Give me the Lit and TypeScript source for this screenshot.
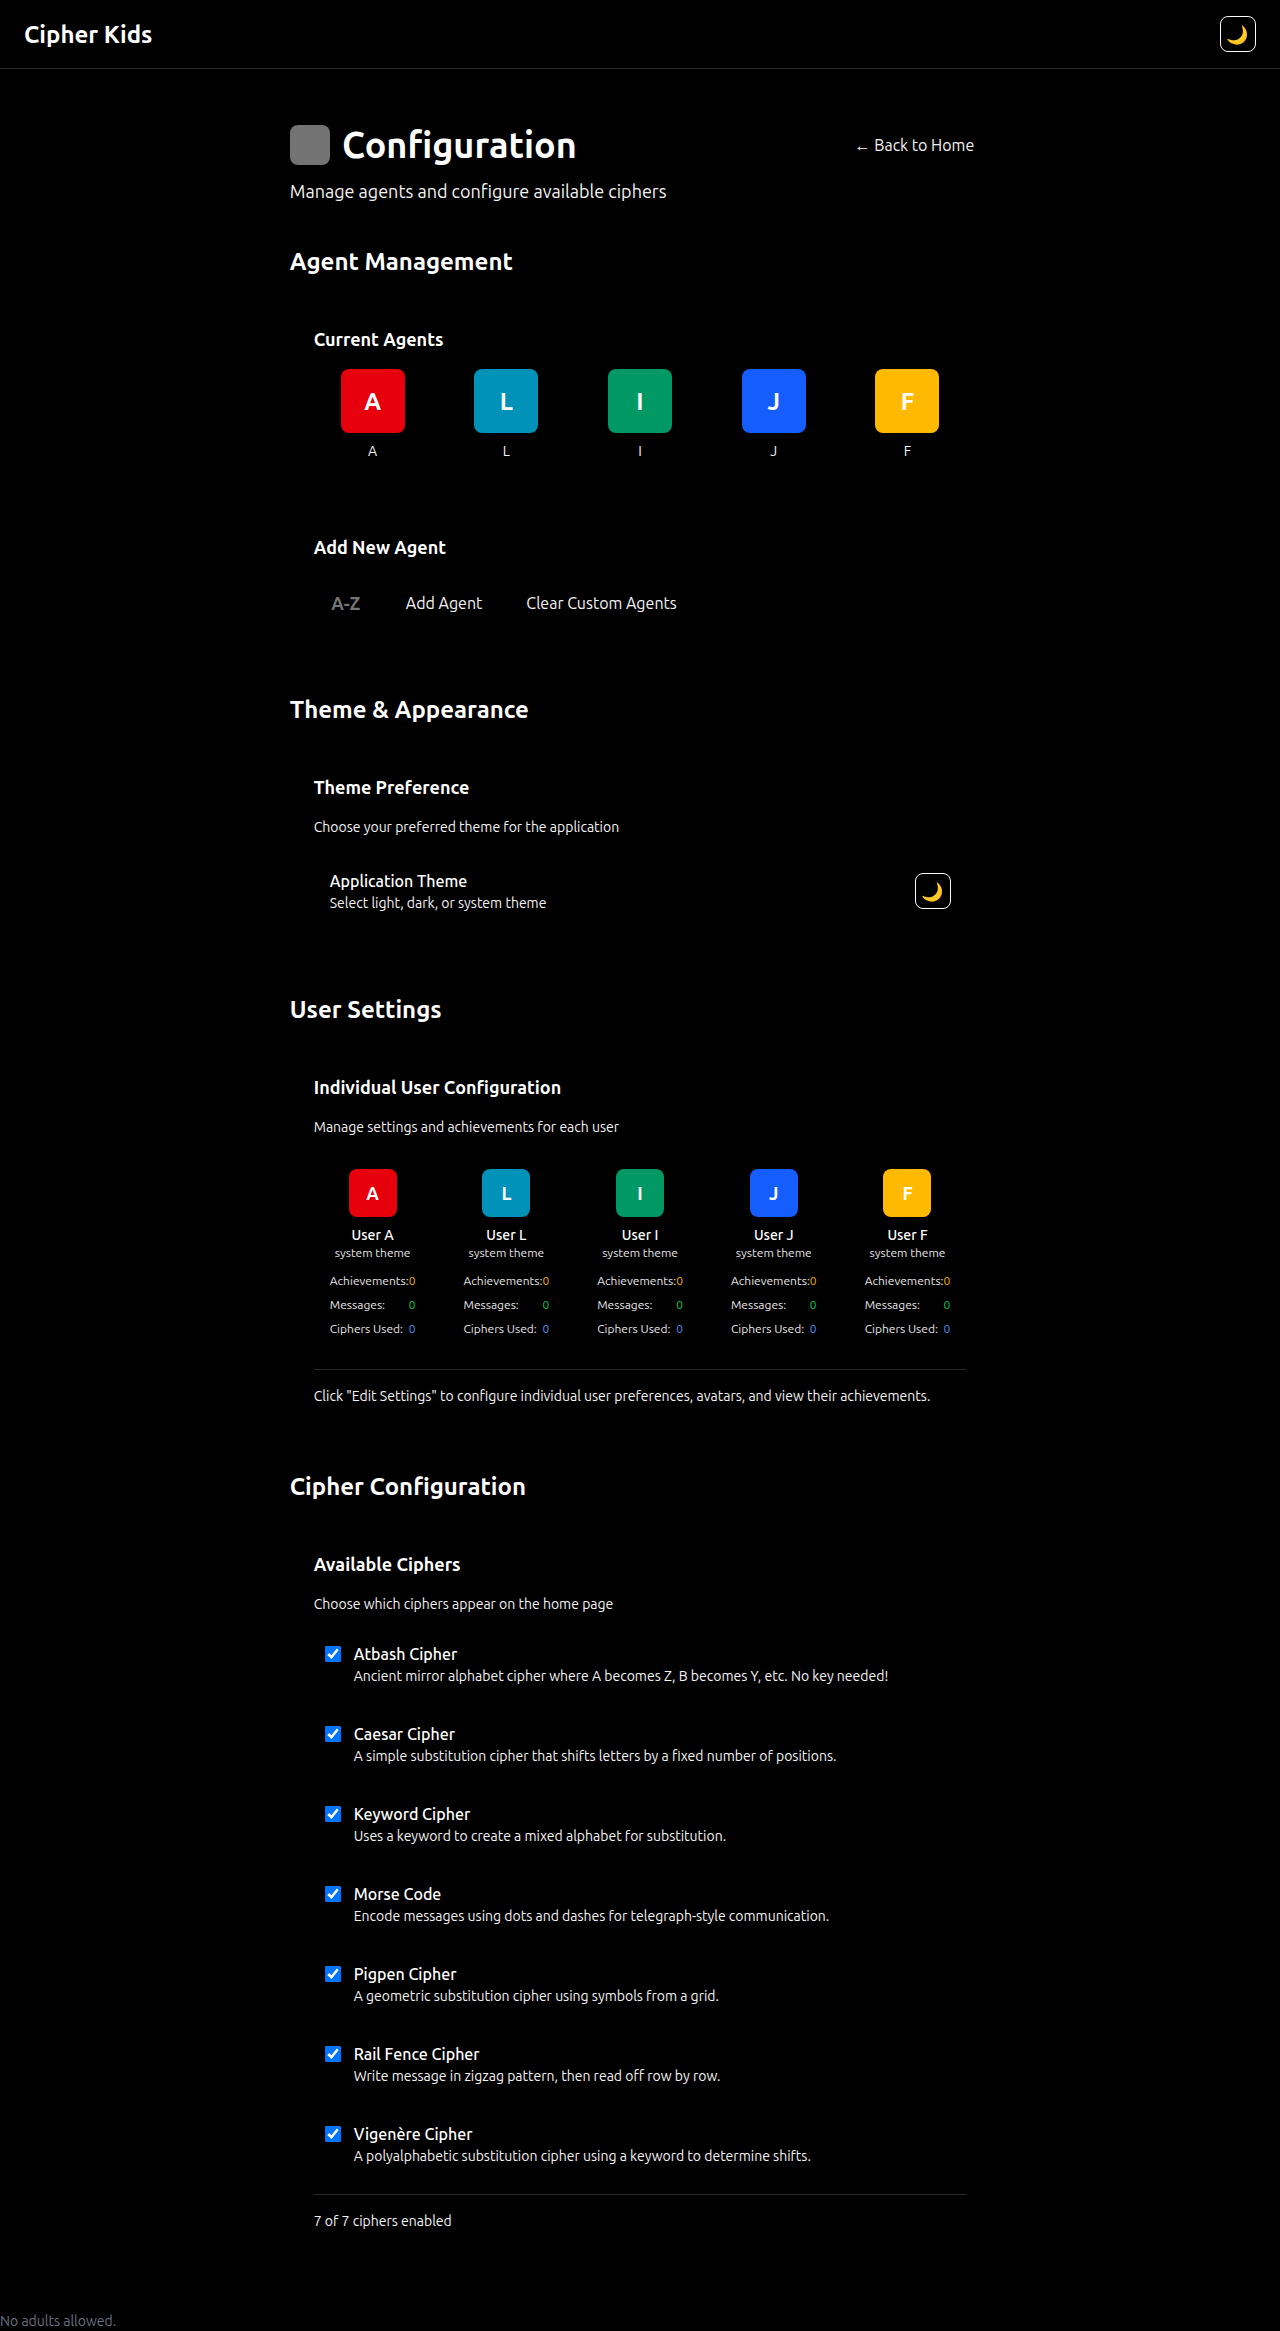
import { LitElement, html, css } from "lit";
import { customElement, property } from "lit/decorators.js";

const AGENTS = [
  { id: "A", tone: "red" },
  { id: "L", tone: "cyan" },
  { id: "I", tone: "green" },
  { id: "J", tone: "blue" },
  { id: "F", tone: "amber" },
];

const CIPHERS = [
  ["Atbash Cipher", "Ancient mirror alphabet cipher where A becomes Z, B becomes Y, etc. No key needed!"],
  ["Caesar Cipher", "A simple substitution cipher that shifts letters by a fixed number of positions."],
  ["Keyword Cipher", "Uses a keyword to create a mixed alphabet for substitution."],
  ["Morse Code", "Encode messages using dots and dashes for telegraph-style communication."],
  ["Pigpen Cipher", "A geometric substitution cipher using symbols from a grid."],
  ["Rail Fence Cipher", "Write message in zigzag pattern, then read off row by row."],
  ["Vigenère Cipher", "A polyalphabetic substitution cipher using a keyword to determine shifts."],
];

@customElement("theme-button")
class ThemeButton extends LitElement {
  static styles = css`
    :host { display: block; }
    .btn {
      display: flex; align-items: center; justify-content: center;
      box-sizing: border-box; width: 36px; height: 36px; padding: 0;
      border: 1px solid #fafafa; border-radius: 8px; background: #000;
      color: #fafafa; font: 18px/28px Ubuntu, "Noto Color Emoji", sans-serif;
    }
  `;
  render() {
    return html`<button class="btn" aria-label="Theme">🌙</button>`;
  }
}

@customElement("agent-tile")
class AgentTile extends LitElement {
  @property() letter = "";
  @property() tone = "";
  @property() size = "lg";
  static styles = css`
    :host { display: block; }
    .tile {
      display: flex; align-items: center; justify-content: center;
      box-sizing: border-box; border-radius: 8px; color: #fff; font-weight: 700;
    }
    .lg { width: 64px; height: 64px; padding-top: 2px; font-size: 24px; line-height: 32px; }
    .sm { width: 48px; height: 48px; font-size: 18px; line-height: 28px; }
    .red { background: #e7000b; }
    .cyan { background: #0092b8; }
    .green { background: #009966; }
    .blue { background: #155dfc; }
    .amber { background: #ffb900; }
  `;
  render() {
    return html`<div class="tile ${this.size} ${this.tone}">${this.letter}</div>`;
  }
}

@customElement("app-root")
class AppRoot extends LitElement {
  static styles = css`
    :host {
      display: block; min-height: 2331px; background: #000; color: #fff;
      font: 16px/24px Ubuntu, "Ubuntu Sans", "Noto Sans", sans-serif;
    }
    h1, h2, h3, p { margin: 0; }
    .bar {
      display: flex; align-items: center; justify-content: space-between;
      padding: 16px 24px; border-bottom: 1px solid #27272a;
    }
    .brand { padding-top: 2px; font-size: 24px; line-height: 32px; font-weight: 700; }
    .main { width: 700.5px; margin: 0 auto; padding-top: 56px; }
    .top { display: flex; align-items: center; justify-content: space-between; padding-right: 16px; height: 40px; }
    .name { display: flex; align-items: center; gap: 12.5px; }
    .mark { width: 40px; height: 40px; margin-left: -0.25px; border-radius: 8px; background: #737373; }
    h1 { font-size: 36px; line-height: 40px; font-weight: 700; }
    .back { color: #f4f4f5; }
    .sub { font-size: 18px; line-height: 28px; margin-top: 12px; color: #f4f4f5; }
    h2 { padding-top: 1px; font-size: 24px; line-height: 32px; font-weight: 700; }
    h3 { font-size: 18px; line-height: 28px; font-weight: 700; }
    .section { padding-top: 40px; }
    .card { padding: 47px 24px 0; }
    .note { font-size: 14px; line-height: 20px; color: #f4f4f5; margin-top: 16px; }
    .grid { display: grid; grid-template-columns: repeat(5, 1fr); gap: 16px; }
    .agents { margin-top: 16px; }
    .agent { display: flex; flex-direction: column; align-items: center; gap: 8px; }
    .caption { font-size: 14px; line-height: 20px; color: #f4f4f5; }
    .add { padding-top: 72px; }
    .form { display: flex; align-items: center; height: 48px; margin-top: 18px; color: #f4f4f5; }
    .hint { width: 64px; text-align: center; font-size: 18px; font-weight: 700; color: #757575; }
    .act { padding: 0 16px; }
    .act.first { margin-left: 12px; }
    .act.second { margin-left: 12px; }
    .row { display: flex; align-items: center; justify-content: space-between; padding: 32px 15.75px 0 16px; }
    .item { font-weight: 500; line-height: 24px; }
    .desc { font-size: 14px; line-height: 20px; color: #f4f4f5; }
    .theme { padding-top: 66px; }
    .users { padding-top: 80px; }
    .people { margin-top: 32px; }
    .person { display: flex; flex-direction: column; align-items: center; padding: 0 16px; }
    .who { font-size: 14px; line-height: 20px; font-weight: 500; margin-top: 8px; }
    .mode { font-size: 12px; line-height: 16px; color: #e4e4e7; white-space: nowrap; }
    .stats { display: flex; flex-direction: column; gap: 8px; width: 100%; margin-top: 12px; }
    .stat { display: flex; justify-content: space-between; font-size: 12px; line-height: 16px; color: #e4e4e7; white-space: nowrap; }
    .n0 { color: #f0b100; }
    .n1 { color: #00c951; }
    .n2 { color: #4a90f0; }
    .foot { border-top: 1px solid #27272a; padding-top: 16px; margin-top: 32px; font-size: 14px; line-height: 20px; color: #f4f4f5; }
    .ciphers { padding-top: 64px; }
    .list { display: flex; flex-direction: column; gap: 36px; margin-top: 28px; padding-left: 11.5px; }
    .cipher { display: flex; gap: 12.5px; height: 44px; }
    .check { width: 16px; height: 16px; margin: 4px 0 0; flex: none; }
    .last { margin-top: 28px; }
    .end { padding-top: 80px; font-size: 14px; line-height: 20px; color: #6a7282; }
  `;

  users() {
    const labels = ["Achievements:", "Messages:", "Ciphers Used:"];
    return AGENTS.map(
      (a) => html`<div class="person">
        <agent-tile size="sm" letter=${a.id} tone=${a.tone}></agent-tile>
        <div class="who">User ${a.id}</div>
        <div class="mode">system theme</div>
        <div class="stats">
          ${labels.map((l, i) => html`<div class="stat"><span>${l}</span><span class="n${i}">0</span></div>`)}
        </div>
      </div>`
    );
  }

  render() {
    return html`
      <header class="bar"><div class="brand">Cipher Kids</div><theme-button></theme-button></header>
      <main class="main">
        <div class="top">
          <div class="name"><div class="mark"></div><h1>Configuration</h1></div>
          <a class="back">← Back to Home</a>
        </div>
        <p class="sub">Manage agents and configure available ciphers</p>

        <section class="section">
          <h2>Agent Management</h2>
          <div class="card">
            <h3>Current Agents</h3>
            <div class="grid agents">
              ${AGENTS.map(
                (a) => html`<div class="agent">
                  <agent-tile letter=${a.id} tone=${a.tone}></agent-tile>
                  <div class="caption">${a.id}</div>
                </div>`
              )}
            </div>
            <h3 class="add">Add New Agent</h3>
            <div class="form">
              <span class="hint">A-Z</span>
              <span class="act first">Add Agent</span>
              <span class="act second">Clear Custom Agents</span>
            </div>
          </div>
        </section>

        <section class="section theme">
          <h2>Theme &amp; Appearance</h2>
          <div class="card">
            <h3>Theme Preference</h3>
            <p class="note">Choose your preferred theme for the application</p>
            <div class="row">
              <div><div class="item">Application Theme</div><div class="desc">Select light, dark, or system theme</div></div>
              <theme-button></theme-button>
            </div>
          </div>
        </section>

        <section class="section users">
          <h2>User Settings</h2>
          <div class="card">
            <h3>Individual User Configuration</h3>
            <p class="note">Manage settings and achievements for each user</p>
            <div class="grid people">${this.users()}</div>
            <div class="foot">Click "Edit Settings" to configure individual user preferences, avatars, and view their achievements.</div>
          </div>
        </section>

        <section class="section ciphers">
          <h2>Cipher Configuration</h2>
          <div class="card">
            <h3>Available Ciphers</h3>
            <p class="note">Choose which ciphers appear on the home page</p>
            <div class="list">
              ${CIPHERS.map(
                ([n, d]) => html`<label class="cipher">
                  <input class="check" type="checkbox" checked />
                  <div><div class="item">${n}</div><div class="desc">${d}</div></div>
                </label>`
              )}
            </div>
            <div class="foot last">7 of 7 ciphers enabled</div>
          </div>
        </section>
      </main>
      <footer class="end">No adults allowed.</footer>
    `;
  }
}
